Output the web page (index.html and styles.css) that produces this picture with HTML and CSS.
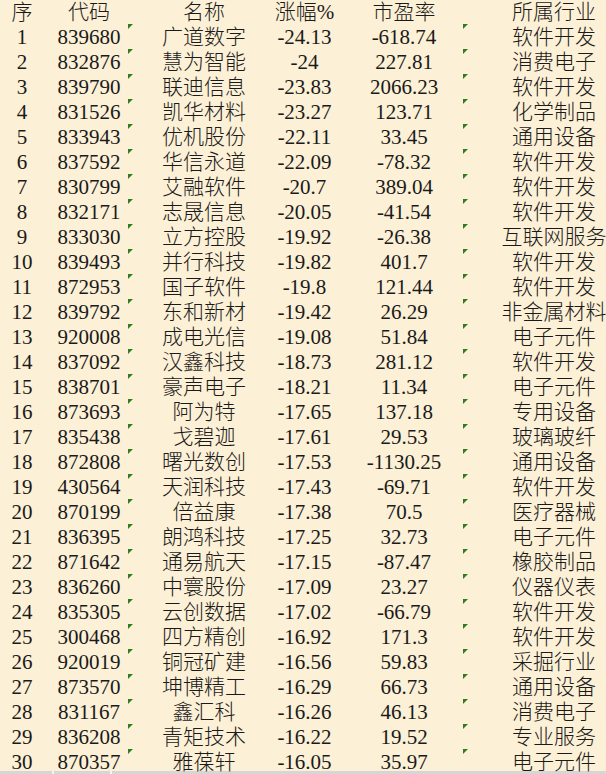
FILE: index.html
```html
<!DOCTYPE html>
<html lang="zh-CN">
<head>
<meta charset="utf-8">
<title>涨幅榜</title>
<link rel="stylesheet" href="styles.css">
</head>
<body>
<div class="sheet">
  <div class="row head"><span>序</span><span>代码</span><span>名称</span><span>涨幅%</span><span>市盈率</span><span>所属行业</span></div>
  <div class="row mark"><span>1</span><span>839680</span><span>广道数字</span><span>-24.13</span><span>-618.74</span><span>软件开发</span></div>
  <div class="row mark"><span>2</span><span>832876</span><span>慧为智能</span><span>-24</span><span>227.81</span><span>消费电子</span></div>
  <div class="row mark"><span>3</span><span>839790</span><span>联迪信息</span><span>-23.83</span><span>2066.23</span><span>软件开发</span></div>
  <div class="row mark"><span>4</span><span>831526</span><span>凯华材料</span><span>-23.27</span><span>123.71</span><span>化学制品</span></div>
  <div class="row mark"><span>5</span><span>833943</span><span>优机股份</span><span>-22.11</span><span>33.45</span><span>通用设备</span></div>
  <div class="row mark"><span>6</span><span>837592</span><span>华信永道</span><span>-22.09</span><span>-78.32</span><span>软件开发</span></div>
  <div class="row mark"><span>7</span><span>830799</span><span>艾融软件</span><span>-20.7</span><span>389.04</span><span>软件开发</span></div>
  <div class="row mark"><span>8</span><span>832171</span><span>志晟信息</span><span>-20.05</span><span>-41.54</span><span>软件开发</span></div>
  <div class="row mark"><span>9</span><span>833030</span><span>立方控股</span><span>-19.92</span><span>-26.38</span><span>互联网服务</span></div>
  <div class="row mark"><span>10</span><span>839493</span><span>并行科技</span><span>-19.82</span><span>401.7</span><span>软件开发</span></div>
  <div class="row mark"><span>11</span><span>872953</span><span>国子软件</span><span>-19.8</span><span>121.44</span><span>软件开发</span></div>
  <div class="row mark"><span>12</span><span>839792</span><span>东和新材</span><span>-19.42</span><span>26.29</span><span>非金属材料</span></div>
  <div class="row mark"><span>13</span><span>920008</span><span>成电光信</span><span>-19.08</span><span>51.84</span><span>电子元件</span></div>
  <div class="row mark"><span>14</span><span>837092</span><span>汉鑫科技</span><span>-18.73</span><span>281.12</span><span>软件开发</span></div>
  <div class="row mark"><span>15</span><span>838701</span><span>豪声电子</span><span>-18.21</span><span>11.34</span><span>电子元件</span></div>
  <div class="row mark"><span>16</span><span>873693</span><span>阿为特</span><span>-17.65</span><span>137.18</span><span>专用设备</span></div>
  <div class="row mark"><span>17</span><span>835438</span><span>戈碧迦</span><span>-17.61</span><span>29.53</span><span>玻璃玻纤</span></div>
  <div class="row mark"><span>18</span><span>872808</span><span>曙光数创</span><span>-17.53</span><span>-1130.25</span><span>通用设备</span></div>
  <div class="row mark"><span>19</span><span>430564</span><span>天润科技</span><span>-17.43</span><span>-69.71</span><span>软件开发</span></div>
  <div class="row mark"><span>20</span><span>870199</span><span>倍益康</span><span>-17.38</span><span>70.5</span><span>医疗器械</span></div>
  <div class="row mark"><span>21</span><span>836395</span><span>朗鸿科技</span><span>-17.25</span><span>32.73</span><span>电子元件</span></div>
  <div class="row mark"><span>22</span><span>871642</span><span>通易航天</span><span>-17.15</span><span>-87.47</span><span>橡胶制品</span></div>
  <div class="row mark"><span>23</span><span>836260</span><span>中寰股份</span><span>-17.09</span><span>23.27</span><span>仪器仪表</span></div>
  <div class="row mark"><span>24</span><span>835305</span><span>云创数据</span><span>-17.02</span><span>-66.79</span><span>软件开发</span></div>
  <div class="row mark"><span>25</span><span>300468</span><span>四方精创</span><span>-16.92</span><span>171.3</span><span>软件开发</span></div>
  <div class="row mark"><span>26</span><span>920019</span><span>铜冠矿建</span><span>-16.56</span><span>59.83</span><span>采掘行业</span></div>
  <div class="row mark"><span>27</span><span>873570</span><span>坤博精工</span><span>-16.29</span><span>66.73</span><span>通用设备</span></div>
  <div class="row mark"><span>28</span><span>831167</span><span>鑫汇科</span><span>-16.26</span><span>46.13</span><span>消费电子</span></div>
  <div class="row mark"><span>29</span><span>836208</span><span>青矩技术</span><span>-16.22</span><span>19.52</span><span>专业服务</span></div>
  <div class="row mark last"><span>30</span><span>870357</span><span>雅葆轩</span><span>-16.05</span><span>35.97</span><span>电子元件</span></div>
</div>
<div class="edge"></div>
</body>
</html>
```
FILE: styles.css
```css
html, body {
  margin: 0;
  padding: 0;
  background: #fcf0d6;
  overflow: hidden;
  width: 606px;
  height: 774px;
}
.sheet {
  font-family: "Liberation Serif", "Noto Sans CJK SC", serif;
  font-size: 21px;
  font-weight: 300;
  color: #1a1a1a;
}
.row {
  position: relative;
  display: grid;
  grid-template-columns: 44px 90px 140px 61px 138px 162px;
  height: 25px;
  line-height: 24px;
  width: 635px;
}
.row.last {
  height: 21px;
}
.row > span {
  display: flex;
  justify-content: center;
  white-space: nowrap;
}
.mark::before,
.mark::after {
  content: "";
  position: absolute;
  top: -1px;
  width: 0;
  height: 0;
  border-top: 5px solid #2f7d1f;
  border-right: 5px solid transparent;
}
.mark::before { left: 128px; }
.mark::after { left: 463px; }
.edge {
  height: 3px;
  background: linear-gradient(to right, #d6d6d6 0 52px, #f4f4f4 52px 54px, #d6d6d6 54px 110px, #f4f4f4 110px 112px, #d6d6d6 112px);
}
```
